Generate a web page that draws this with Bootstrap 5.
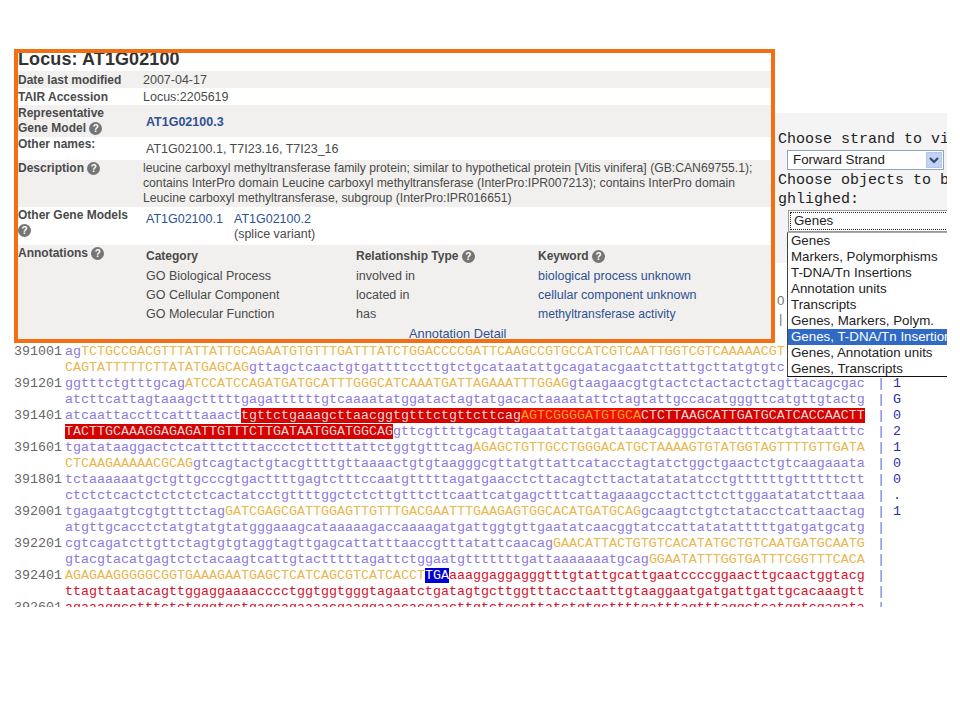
<!DOCTYPE html>
<html lang="en">
<head>
<meta charset="utf-8">
<title>Locus AT1G02100</title>
<link href="https://cdn.jsdelivr.net/npm/bootstrap@5.3.0/dist/css/bootstrap.min.css" rel="stylesheet">
<style>
html,body{background:#fff;margin:0;overflow:hidden}
.stage{position:relative;width:960px;height:720px;overflow:hidden}
.seqblock{padding:344px 0 0 14px;height:607px;overflow:hidden;font:13.33px/16px "Liberation Mono","Courier New",monospace;color:#8d78dc}
.seqrow{height:16px;white-space:pre}
.num{width:51px;color:#666;flex:none}
.bases{width:800px;flex:none}
.ex{color:#e9b64c}
.hl{background:#d90000;color:#d8d8d8}
.hl2{background:#f00f00;color:#f2a030}
.stop{background:#0000d0;color:#fff}
.rd{color:#d8102c}
.pipe{width:28px;text-align:right;padding-right:8px;flex:none;color:#5a78d8}
.frag{color:#2a30a8;padding-left:0}
.locus{position:absolute;left:14px;top:49px;width:761px;height:294px;border:4px solid #f26f14;background:#fff;overflow:hidden;font:12.5px/15px "Liberation Sans",Arial,sans-serif;color:#4a4a4a}
.locus h1{font:bold 18px/18px "Liberation Sans",Arial,sans-serif;color:#333;margin:-3px 0 3px;height:18px;letter-spacing:.1px}
.lrow{width:100%}
.alt{background:#f1f0ee}
.lab{width:125px;flex:none;font-weight:bold;font-size:12px;color:#4a4a4a}
.r17{height:17px;line-height:19px}
.r32{height:32px;padding-top:1px}
.r23{height:23px}
.r47{height:47px;padding-top:1px}
.r38{height:38px;padding-top:1px}
.r94{height:94px;padding-top:1px}
.ind{padding-left:3px}
.repval{padding-top:2px}
.namesval{padding-top:5px}
.descr{font-size:12.2px}
.tight{font-size:12.2px}
.locus a{color:#2f5191;text-decoration:none}
.help{display:inline-block;width:13px;height:13px;border-radius:50%;background:#757575;color:#fff;font:bold 10px/13px "Liberation Sans",sans-serif;text-align:center;vertical-align:0;letter-spacing:0}
.c1{width:210px}.c2{width:182px}
.gm{width:88px}
.annrow{height:19px;line-height:19px}
.annhead{font-weight:bold;font-size:12px;height:21px;line-height:20px}
.anndetail{padding-left:263px;height:19px;line-height:19px;font-size:12.8px}
.side{position:absolute;left:775px;top:113px;width:172px;height:150px;background:#f4f4f4;overflow:hidden;font:15px/19px "Liberation Mono","Courier New",monospace;color:#222;white-space:pre;padding:17px 0 0 3px}
.fake{font:13.33px/17px "Liberation Sans",Arial,sans-serif;color:#222;background:#fff}
.strand{width:157px;height:20px;margin:1px 0 1px 9px;border:1px solid #8fa5bd;padding-left:5px;position:relative}
.arrow{position:absolute;right:1px;top:1px;width:16px;height:16px;background:#c3d2f2;border:1px solid #b4c6ec;display:flex;align-items:center;justify-content:center}
.focusbox{width:160px;height:22px;margin:1px 0 0 10px;border:1px solid #999;padding:1px;line-height:16px}
.focusbox span{display:block;border:1px dotted #222;padding-left:3px;height:18px;border-right:0}
.droplist{position:absolute;left:787px;top:232px;width:160px;height:145px;background:#fff;border-left:1px solid #444;border-top:1px solid #aaa;border-bottom:1px solid #111;overflow:hidden;font:13.33px/16px "Liberation Sans",Arial,sans-serif;color:#222;white-space:nowrap}
.droplist div{height:16px;padding-left:3px}
.droplist .sel{background:#316ac5;color:#fff}
.under{position:absolute;font:13.33px/16px "Liberation Sans",sans-serif;color:#777}
.u1{left:777px;top:293px}.u2{left:779px;top:311px}
</style>
</head>
<body>
<div class="stage">
<div class="seqblock">
<div class="seqrow d-flex"><span class="num">391001</span><span class="bases">ag<span class="ex">TCTGCCGACGTTTATTATTGCAGAATGTGTTTGATTTATCTGGACCCCGATTCAAGCCGTGCCATCGTCAATTGGTCGTCAAAAACGT</span></span></div>
<div class="seqrow d-flex"><span class="num"></span><span class="bases"><span class="ex">CAGTATTTTTCTTATATGAGCAG</span>gttagctcaactgtgattttccttgtctgcataatattgcagatacgaatcttattgcttatgtgtc</span></div>
<div class="seqrow d-flex"><span class="num">391201</span><span class="bases">ggtttctgtttgcag<span class="ex">ATCCATCCAGATGATGCATTTGGGCATCAAATGATTAGAAATTTGGAG</span>gtaagaacgtgtactctactactctagttacagcgac</span><span class="pipe">|</span><span class="frag">1</span></div>
<div class="seqrow d-flex"><span class="num"></span><span class="bases">atcttcattagtaaagctttttgagattttttgtcaaaatatggatactagtatgacactaaaatattctagtattgccacatgggttcatgttgtactg</span><span class="pipe">|</span><span class="frag">G</span></div>
<div class="seqrow d-flex"><span class="num">391401</span><span class="bases">atcaattaccttcatttaaact<span class="hl">tgttctgaaagcttaacggtgtttctgttcttcag</span><span class="hl2">AGTCGGGGATGTGCA</span><span class="hl">CTCTTAAGCATTGATGCATCACCAACTT</span></span><span class="pipe">|</span><span class="frag">0</span></div>
<div class="seqrow d-flex"><span class="num"></span><span class="bases"><span class="hl">TACTTGCAAAGGAGAGATTGTTTCTTGATAATGGATGGCAG</span>gttcgttttgcagttagaatattatgattaaagcagggctaactttcatgtataatttc</span><span class="pipe">|</span><span class="frag">2</span></div>
<div class="seqrow d-flex"><span class="num">391601</span><span class="bases">tgatataaggactctcatttctttaccctcttctttattctggtgtttcag<span class="ex">AGAGCTGTTGCCTGGGACATGCTAAAAGTGTATGGTAGTTTTGTTGATA</span></span><span class="pipe">|</span><span class="frag">1</span></div>
<div class="seqrow d-flex"><span class="num"></span><span class="bases"><span class="ex">CTCAAGAAAAACGCAG</span>gtcagtactgtacgttttgttaaaactgtgtaagggcgttatgttattcatacctagtatctggctgaactctgtcaagaaata</span><span class="pipe">|</span><span class="frag">0</span></div>
<div class="seqrow d-flex"><span class="num">391801</span><span class="bases">tctaaaaaatgctgttgcccgtgacttttgagtctttccaatgtttttagatgaacctcttacagtcttactatatatatcctgttttttgttttttctt</span><span class="pipe">|</span><span class="frag">0</span></div>
<div class="seqrow d-flex"><span class="num"></span><span class="bases">ctctctcactctctctctcactatcctgttttggctctcttgtttcttcaattcatgagctttcattagaaagcctacttctcttggaatatatcttaaa</span><span class="pipe">|</span><span class="frag">.</span></div>
<div class="seqrow d-flex"><span class="num">392001</span><span class="bases">tgagaatgtcgtgtttctag<span class="ex">GATCGAGCGATTGGAGTTGTTTGACGAATTTGAAGAGTGGCACATGATGCAG</span>gcaagtctgtctatacctcattaactag</span><span class="pipe">|</span><span class="frag">1</span></div>
<div class="seqrow d-flex"><span class="num"></span><span class="bases">atgttgcacctctatgtatgtatgggaaagcataaaaagaccaaaagatgattggtgttgaatatcaacggtatccattatatatttttgatgatgcatg</span><span class="pipe">|</span></div>
<div class="seqrow d-flex"><span class="num">392201</span><span class="bases">cgtcagatcttgttctagtgtgtaggtagttgagcattatttaaccgtttatattcaacag<span class="ex">GAACATTACTGTGTCACATATGCTGTCAATGATGCAATG</span></span><span class="pipe">|</span></div>
<div class="seqrow d-flex"><span class="num"></span><span class="bases">gtacgtacatgagtctctacaagtcattgtactttttagattctggaatgtttttttgattaaaaaaatgcag<span class="ex">GGAATATTTGGTGATTTCGGTTTCACA</span></span><span class="pipe">|</span></div>
<div class="seqrow d-flex"><span class="num">392401</span><span class="bases"><span class="ex">AGAGAAGGGGGCGGTGAAAGAATGAGCTCATCAGCGTCATCACCT</span><span class="stop">TGA</span><span class="rd">aaaggaggagggtttgtattgcattgaatccccggaacttgcaactggtacg</span></span><span class="pipe">|</span></div>
<div class="seqrow d-flex"><span class="num"></span><span class="bases rd">ttagttaatacagttggaggaaaacccctggtggtgggtagaatctgatagtgcttggtttacctaatttgtaaggaatgatgattgattgcacaaagtt</span><span class="pipe">|</span></div>
<div class="seqrow d-flex"><span class="num">392601</span><span class="bases rd">agaaaggcctttctctgggtgctgagcagaaaacgaaggaaacacgaacttgtctgcgttatctgtgcttttgatttagtttaggctcatggtcgagata</span><span class="pipe">|</span></div>
</div>

<div class="under u1">0</div>
<div class="under u2">|</div>

<div class="side">Choose strand to view
<div class="fake strand">Forward Strand<span class="arrow"><svg width="10" height="8" viewBox="0 0 10 8"><path d="M1 2l4 4 4-4" fill="none" stroke="#2f4b7c" stroke-width="2.2"/></svg></span></div>Choose objects to be
ghlighed:
<div class="fake focusbox"><span>Genes</span></div></div>

<div class="droplist">
<div>Genes</div>
<div>Markers, Polymorphisms</div>
<div>T-DNA/Tn Insertions</div>
<div>Annotation units</div>
<div>Transcripts</div>
<div>Genes, Markers, Polym.</div>
<div class="sel">Genes, T-DNA/Tn Insertions</div>
<div>Genes, Annotation units</div>
<div>Genes, Transcripts</div>
</div>

<section class="locus">
<h1>Locus: AT1G02100</h1>
<div class="lrow alt r17 d-flex"><div class="lab">Date last modified</div><div>2007-04-17</div></div>
<div class="lrow r17 d-flex"><div class="lab">TAIR Accession</div><div>Locus:2205619</div></div>
<div class="lrow alt r32 d-flex align-items-start"><div class="lab">Representative<br>Gene Model <span class="help">?</span></div><div class="ind align-self-center repval"><a href="#"><b>AT1G02100.3</b></a></div></div>
<div class="lrow r23 d-flex"><div class="lab">Other names:</div><div class="ind namesval">AT1G02100.1, T7I23.16, T7I23_16</div></div>
<div class="lrow alt r47 d-flex"><div class="lab">Description <span class="help">?</span></div><div class="descr">leucine carboxyl methyltransferase family protein; similar to hypothetical protein [Vitis vinifera] (GB:CAN69755.1);<br>contains InterPro domain Leucine carboxyl methyltransferase (InterPro:IPR007213); contains InterPro domain<br>Leucine carboxyl methyltransferase, subgroup (InterPro:IPR016651)</div></div>
<div class="lrow r38 d-flex"><div class="lab">Other Gene Models <span class="help">?</span></div><div class="ind d-flex pt-1"><div class="gm"><a href="#">AT1G02100.1</a></div><div><a href="#">AT1G02100.2</a><br>(splice variant)</div></div></div>
<div class="lrow alt r94 d-flex"><div class="lab">Annotations <span class="help">?</span></div><div class="ind flex-grow-1">
<div class="annhead d-flex"><div class="c1">Category</div><div class="c2">Relationship Type <span class="help">?</span></div><div>Keyword <span class="help">?</span></div></div>
<div class="annrow d-flex"><div class="c1">GO Biological Process</div><div class="c2">involved in</div><div><a href="#">biological process unknown</a></div></div>
<div class="annrow d-flex"><div class="c1">GO Cellular Component</div><div class="c2">located in</div><div><a href="#">cellular component unknown</a></div></div>
<div class="annrow d-flex"><div class="c1">GO Molecular Function</div><div class="c2">has</div><div><a class="tight" href="#">methyltransferase activity</a></div></div>
<div class="anndetail"><a href="#">Annotation Detail</a></div>
</div></div>
</section>
</div>
<script src="https://cdn.jsdelivr.net/npm/bootstrap@5.3.0/dist/js/bootstrap.bundle.min.js"></script>
</body>
</html>
